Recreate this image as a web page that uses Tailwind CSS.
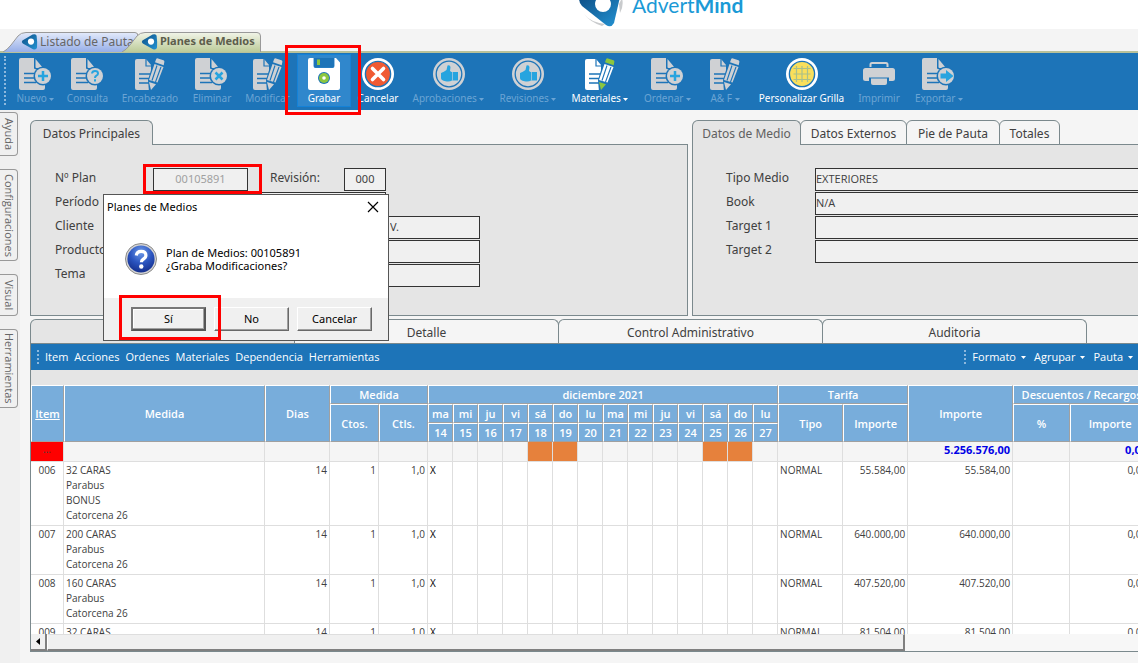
<!DOCTYPE html>
<html lang="es">
<head>
    <meta charset="UTF-8">
    <meta name="viewport" content="width=device-width, initial-scale=1.0">
    <title>AdvertMind - Planes de Medios</title>
    <script src="https://cdn.jsdelivr.net/npm/@tailwindcss/browser@4"></script>
</head>
<body class="h-screen flex flex-col overflow-hidden bg-[#f5f5f5] font-['Noto_Sans',sans-serif] text-[12px] text-[#404040]">
    <!-- Shared icons -->
    <svg class="absolute w-0 h-0">
        <defs>
            <linearGradient id="g-tri" x1="0" y1="0" x2="1" y2="1">
                <stop offset="0" stop-color="#0d4f86"/><stop offset="1" stop-color="#2494d4"/>
            </linearGradient>
        </defs>
        <symbol id="i-brand" viewBox="0 0 18 18">
            <path d="M1.400 7.400 11.600 1.600q3.600-1 4 1.200.9 6.200.4 11.800-.6 2.600-4 1.600L1.800 10.400q-1.800-1.400-.4-3z" fill="url(#g-tri)"/>
            <circle cx="10" cy="8.600" r="3.100" fill="#fff"/>
        </symbol>
        <symbol id="i-doc" viewBox="0 0 34 32">
            <path d="M2 0h13v10q0 1 1 1h10v19q0 2-2 2H2q-2 0-2-2V2q0-2 2-2z" fill="currentColor"/>
            <path d="M15 0h13v10H16z" fill="#1d74b8"/>
            <path d="M16.500 1 24 10H17.500q-1 0-1-1z" fill="currentColor"/>
            <path d="M5 15.500h12M5 20h11M5 24.500h12" stroke="#1d74b8" stroke-width="1.600"/>
            <circle cx="24" cy="18" r="9.500" fill="#1d74b8"/>
            <circle cx="24" cy="18" r="8" fill="currentColor"/>
        </symbol>
        <symbol id="i-pencil" viewBox="0 0 32 32">
            <path d="M3 1h9l5 6v21q0 4-2 4H3q-2 0-2-2V3q0-2 2-2z" fill="currentColor"/>
            <path d="M12 1v7h6" fill="none" stroke="#1d74b8" stroke-width="1.200"/>
            <path d="M5 16h11M5 20.500h11M5 25h11" stroke="#1d74b8" stroke-width="1.600"/>
            <path d="M21-1 32 2.500 23 25 15 34 14 22z" fill="#1d74b8"/>
            <path d="M20.500 6 29.500 9 23.500 24.500 15 22z" fill="currentColor"/>
            <path d="M23 7.500 18 22.500M27 9l-5.500 15" stroke="#1d74b8" stroke-width="1.100"/>
        </symbol>
        <symbol id="i-like" viewBox="0 0 32 32">
            <circle cx="16" cy="16" r="16" fill="currentColor"/>
            <circle cx="16" cy="16" r="12.800" fill="currentColor" stroke="#1d74b8" stroke-width="1.300"/>
            <path d="M18.500 14h6.500v8.500h-6q-2.500 1.500-6.500.7-4.500-.7-4.500-3.200v-5q3-.8 5.500-3l1-4.500q2.500-1 3 1.500l-.5 4z" fill="#27a4df"/>
            <path d="M19.500 14v9" stroke="#8fc3e0" stroke-width="1"/>
        </symbol>
    </svg>

    <!-- Brand header -->
    <header class="relative h-[29px] shrink-0 bg-white pl-[578px] flex items-start gap-[9px]">
        <svg class="w-[45px] h-[29px]" viewBox="0 0 45 29">
            <path d="M6 14Q12 22 27 24L24 26Q12 22 6 14zM44-2Q46 6 42 13L41 4z" fill="#c9cbcd"/>
            <path d="M2-3Q0 2 4 6L28 25Q33 28.500 36 23L42-3z" fill="url(#g-tri)"/>
            <circle cx="25" cy="4" r="8" fill="#fff"/>
        </svg>
        <div class="-mt-[9px] font-['Lato',sans-serif] text-[21px] leading-[28px] text-[#1b9ad6]">Advert<b class="font-bold">Mind</b></div>
    </header>

    <!-- Open documents -->
    <nav class="flex h-[24px] shrink-0 bg-[#f4f4f4] border-b-2 border-[#b8c19a] pt-[3px] pl-[3px]">
        <button class="relative h-[19px] w-[119px] pl-[18px] flex items-center gap-px text-[12px] text-[#666] whitespace-nowrap">
            <svg class="absolute left-0 top-0 w-[136px] h-[20px]" viewBox="0 0 136 20">
                <defs><linearGradient id="g-tab1" x2="0" y2="1"><stop offset="0" stop-color="#e3eafa"/><stop offset="1" stop-color="#96aee8"/></linearGradient></defs>
                <path d="M0 20Q4 18 8 13L15 4Q18 .5 23 .5H132Q135 .5 135 4V20" fill="url(#g-tab1)" stroke="#999"/>
            </svg>
            <svg class="relative w-[18px] h-[18px] shrink-0"><use href="#i-brand"/></svg>
            <span class="relative">Listado de Pautas</span>
        </button>
        <button class="relative h-[19px] w-[140px] pl-[19px] flex items-center gap-px text-[11px] font-bold text-[#5d5d4c] whitespace-nowrap">
            <svg class="absolute left-0 top-0 w-[140px] h-[20px]" viewBox="0 0 140 20">
                <defs><linearGradient id="g-tab2" x2="0" y2="1"><stop offset="0" stop-color="#f1f4e8"/><stop offset="1" stop-color="#bccb98"/></linearGradient></defs>
                <path d="M0 20Q4 18 8 13L15 4Q18 .5 23 .5H135Q138.500 .5 138.500 4V20" fill="url(#g-tab2)" stroke="#999"/>
            </svg>
            <svg class="relative w-[18px] h-[18px] shrink-0"><use href="#i-brand"/></svg>
            <span class="relative">Planes de Medios</span>
        </button>
    </nav>

    <!-- Main toolbar -->
    <div id="toolbar" class="flex h-[57px] shrink-0 bg-[#1d74b8] pl-[4px] pt-px text-[10px] text-white">
        <div class="w-[6px] h-[49px] mt-[2px]"><div class="w-0 h-full border-l-2 border-dotted border-[#8db8dd]"></div></div>
        <button class="w-[51px] h-[53px] flex flex-col items-center pt-1 text-[#6ba4d4]">
            <svg class="w-[34px] h-[32px] shrink-0 text-[#cfd1d4]" viewBox="0 0 34 32"><use href="#i-doc"/><path d="M24 13v10M19 18h10" stroke="#27a4df" stroke-width="2.500"/></svg>
            <span class="leading-[17px] whitespace-nowrap">Nuevo <svg class="inline w-[5px] h-[3px]" viewBox="0 0 5 3"><path d="M0 0h5L2.500 3z" fill="currentColor"/></svg></span>
        </button>
        <button class="w-[53px] h-[53px] flex flex-col items-center pt-1 text-[#6ba4d4]">
            <svg class="w-[34px] h-[32px] shrink-0 text-[#cfd1d4]" viewBox="0 0 34 32"><use href="#i-doc"/><path d="M21 15.500q.3-2.500 3-2.500 3 0 3 2.400 0 1.400-1.600 2.200-1.400.8-1.400 2.400M24 21.300v2.200" fill="none" stroke="#27a4df" stroke-width="2"/></svg>
            <span class="leading-[17px]">Consulta</span>
        </button>
        <button class="w-[72px] h-[53px] flex flex-col items-center pt-1 text-[#6ba4d4]">
            <svg class="w-[32px] h-[32px] shrink-0 text-[#cfd1d4]" viewBox="0 0 32 32"><use href="#i-pencil"/><path d="M22 1.500q.6-1.500 2-1.100l5.500 1.900q1.300.6.8 2L29.700 7.300 21 4.300zM15 24l7 2.200L17 32z" fill="currentColor"/></svg>
            <span class="leading-[17px]">Encabezado</span>
        </button>
        <button class="w-[52px] h-[53px] flex flex-col items-center pt-1 text-[#6ba4d4]">
            <svg class="w-[34px] h-[32px] shrink-0 text-[#cfd1d4]" viewBox="0 0 34 32"><use href="#i-doc"/><path d="m20.500 14.500 7 7m0-7-7 7" stroke="#27a4df" stroke-width="2.500"/></svg>
            <span class="leading-[17px]">Eliminar</span>
        </button>
        <button class="w-[59px] h-[53px] flex flex-col items-center pt-1 text-[#6ba4d4]">
            <svg class="w-[32px] h-[32px] shrink-0 text-[#cfd1d4]" viewBox="0 0 32 32"><use href="#i-pencil"/><path d="M22 1.500q.6-1.500 2-1.100l5.500 1.900q1.300.6.8 2L29.700 7.300 21 4.300zM15 24l7 2.200L17 32z" fill="currentColor"/></svg>
            <span class="leading-[17px]">Modificar</span>
        </button>
        <button class="relative w-[54px] h-[53px] flex flex-col items-center pt-[3px] border border-[#1482d8] bg-[#3087cc]">
            <svg class="w-[32px] h-[32px] shrink-0" viewBox="0 0 32 32">
                <path d="M2 0h3.500v8q0 2 2 2h17q2 0 2-2V0H28l4 4.500V30q0 2-2 2H2q-2 0-2-2V2q0-2 2-2z" fill="#fff"/>
                <path d="M6 0h20v8q0 1.500-1.500 1.500h-17Q6 9.500 6 8z" fill="#1d74b8"/>
                <path d="M9 1.500h3V7H9z" fill="#8cc63f"/>
                <circle cx="16" cy="20" r="6" fill="#1d74b8"/><circle cx="16" cy="20" r="5" fill="#8cc63f"/><circle cx="16" cy="20" r="1.800" fill="#fff"/>
            </svg>
            <span class="leading-[17px]">Grabar</span>
            <span class="absolute z-10 -left-[13px] -top-[10px] w-[76px] h-[70px] border-3 border-[#f00]"></span>
        </button>
        <button class="w-[54px] h-[53px] flex flex-col items-center pt-1">
            <svg class="w-[32px] h-[32px] shrink-0" viewBox="0 0 32 32">
                <circle cx="16" cy="16" r="16" fill="#fff"/><circle cx="16" cy="16" r="12.600" fill="#f05a33" stroke="#1d74b8" stroke-width="1.400"/>
                <path d="m10.500 10.500 11 11m0-11-11 11" stroke="#fff" stroke-width="3.600" stroke-linecap="round"/>
            </svg>
            <span class="leading-[17px]">Cancelar</span>
        </button>
        <button class="w-[87px] h-[53px] flex flex-col items-center pt-1 text-[#6ba4d4]">
            <svg class="w-[32px] h-[32px] shrink-0 text-[#cfd1d4]"><use href="#i-like"/></svg>
            <span class="leading-[17px] whitespace-nowrap">Aprobaciones <svg class="inline w-[5px] h-[3px]" viewBox="0 0 5 3"><path d="M0 0h5L2.500 3z" fill="currentColor"/></svg></span>
        </button>
        <button class="w-[72px] h-[53px] flex flex-col items-center pt-1 text-[#6ba4d4]">
            <svg class="w-[32px] h-[32px] shrink-0 text-[#cfd1d4]"><use href="#i-like"/></svg>
            <span class="leading-[17px] whitespace-nowrap">Revisiones <svg class="inline w-[5px] h-[3px]" viewBox="0 0 5 3"><path d="M0 0h5L2.500 3z" fill="currentColor"/></svg></span>
        </button>
        <button class="w-[72px] h-[53px] flex flex-col items-center pt-1">
            <svg class="w-[32px] h-[32px] shrink-0" viewBox="0 0 32 32"><use href="#i-pencil"/><path d="M22 1.500q.6-1.500 2-1.100l5.500 1.900q1.300.6.8 2L29.700 7.300 21 4.300zM15 24l7 2.200L17 32z" fill="#8cc63f"/></svg>
            <span class="leading-[17px] whitespace-nowrap">Materiales <svg class="inline w-[5px] h-[3px]" viewBox="0 0 5 3"><path d="M0 0h5L2.500 3z" fill="currentColor"/></svg></span>
        </button>
        <button class="w-[63px] h-[53px] flex flex-col items-center pt-1 text-[#6ba4d4]">
            <svg class="w-[34px] h-[32px] shrink-0 text-[#cfd1d4]" viewBox="0 0 34 32"><use href="#i-doc"/><path d="M24 13v10M19 18h10" stroke="#27a4df" stroke-width="2.500"/></svg>
            <span class="leading-[17px] whitespace-nowrap">Ordenar <svg class="inline w-[5px] h-[3px]" viewBox="0 0 5 3"><path d="M0 0h5L2.500 3z" fill="currentColor"/></svg></span>
        </button>
        <button class="w-[52px] h-[53px] flex flex-col items-center pt-1 text-[#6ba4d4]">
            <svg class="w-[32px] h-[32px] shrink-0 text-[#cfd1d4]" viewBox="0 0 32 32"><use href="#i-pencil"/><path d="M22 1.500q.6-1.500 2-1.100l5.500 1.900q1.300.6.8 2L29.700 7.300 21 4.300zM15 24l7 2.200L17 32z" fill="currentColor"/></svg>
            <span class="leading-[17px] whitespace-nowrap">A&amp; F <svg class="inline w-[5px] h-[3px]" viewBox="0 0 5 3"><path d="M0 0h5L2.500 3z" fill="currentColor"/></svg></span>
        </button>
        <button class="w-[101px] h-[53px] flex flex-col items-center pt-1">
            <svg class="w-[32px] h-[32px] shrink-0" viewBox="0 0 32 32">
                <circle cx="16" cy="16" r="16" fill="#fff"/><circle cx="16" cy="16" r="12.600" fill="#f9df5b" stroke="#1d74b8" stroke-width="1.400"/>
                <path d="M7.500 10.500h17M7.500 16h17M7.500 21.500h17M10.500 8v16M16 8v16M21.500 8v16" stroke="#a9c08a" stroke-width="1.200"/>
            </svg>
            <span class="leading-[17px] whitespace-nowrap">Personalizar Grilla</span>
        </button>
        <button class="w-[54px] h-[53px] flex flex-col items-center pt-1 text-[#6ba4d4]">
            <svg class="w-[32px] h-[32px] shrink-0 text-[#cfd1d4]" viewBox="0 0 32 32">
                <path d="M7.500 9V6.500Q7.500 5 9 5h14q1.500 0 1.500 1.500V9" fill="none" stroke="currentColor" stroke-width="2"/>
                <path d="M2.500 10h27q2.500 0 2.500 2.500v8q0 2.500-2.500 2.500H26v-3.500H6V23H2.500Q0 23 0 20.500v-8Q0 10 2.500 10z" fill="currentColor"/>
                <path d="M8 20.500h16V25q0 2-2 2H10q-2 0-2-2z" fill="currentColor"/>
            </svg>
            <span class="leading-[17px]">Imprimir</span>
        </button>
        <button class="w-[66px] h-[53px] flex flex-col items-center pt-1 text-[#6ba4d4]">
            <svg class="w-[34px] h-[32px] shrink-0 text-[#cfd1d4]" viewBox="0 0 34 32"><use href="#i-doc"/><path d="M18.500 15.500H24V12l7.500 6-7.500 6v-3.500h-5.500z" fill="#27a4df"/></svg>
            <span class="leading-[17px] whitespace-nowrap">Exportar <svg class="inline w-[5px] h-[3px]" viewBox="0 0 5 3"><path d="M0 0h5L2.500 3z" fill="currentColor"/></svg></span>
        </button>
    </div>

    <div class="flex flex-1 min-h-0">
        <!-- Side tabs -->
        <nav class="w-[20px] shrink-0 bg-[#f0f0f0] pt-[2px] flex flex-col items-start gap-[13px] font-['Open_Sans',sans-serif] text-[11px] text-[#666]">
            <button class="w-[18px] h-[44px] border border-l-0 border-[#999] rounded-r-[4px] flex items-center justify-center [writing-mode:vertical-rl]">Ayuda</button>
            <button class="w-[18px] h-[92px] border border-l-0 border-[#999] rounded-r-[4px] flex items-center justify-center [writing-mode:vertical-rl]">Configuraciones</button>
            <button class="w-[18px] h-[42px] border border-l-0 border-[#999] rounded-r-[4px] flex items-center justify-center [writing-mode:vertical-rl]">Visual</button>
            <button class="w-[18px] h-[79px] border border-l-0 border-[#999] rounded-r-[4px] flex items-center justify-center [writing-mode:vertical-rl]">Herramientas</button>
        </nav>

        <main class="relative flex-1 min-w-0 flex flex-col pl-[10px] pt-[10px] pb-[11px]">
            <div class="flex gap-[4px] shrink-0">
                <!-- Datos principales -->
                <section class="w-[658px] shrink-0">
                    <div class="flex h-[25px]">
                        <button class="relative z-10 h-[25px] w-[123px] pt-[2px] border border-b-0 border-[#7b898d] rounded-t-[6px] bg-[#e5e5e5]">Datos Principales</button>
                    </div>
                    <div class="-mt-px h-[172px] border border-[#7b898d] bg-[#e5e5e5] pl-[24px] pt-[23px] flex flex-col gap-px [&_label]:pb-[3px] [&_input]:pb-[3px]">
                        <div class="flex items-center h-[23px]">
                            <label for="plan" class="w-[98px]">Nº Plan</label>
                            <div class="relative w-[95px] h-[23px]">
                                <input id="plan" value="00105891" class="w-full h-full border border-[#333] bg-[#f0f0f0] text-center text-[11px] text-[#a0a0a0]">
                                <span class="absolute -left-[10px] -top-[4px] w-[119px] h-[30px] border-3 border-[#f00]"></span>
                            </div>
                            <label for="revision" class="w-[96px] pl-[22px]">Revisión:</label>
                            <input id="revision" value="000" class="w-[42px] h-[23px] border border-[#333] bg-[#f0f0f0] text-center text-[11px]">
                        </div>
                        <div class="flex items-center h-[23px]">
                            <label for="periodo" class="w-[98px]">Período</label>
                            <input id="periodo" class="w-[233px] h-[23px] border border-[#333] bg-[#f0f0f0]">
                        </div>
                        <div class="flex items-center h-[23px]">
                            <label for="cliente" class="w-[98px]">Cliente</label>
                            <input id="cliente" value="V." class="w-[327px] h-[23px] border border-[#333] bg-[#f0f0f0] pl-[236px] text-[11px]">
                        </div>
                        <div class="flex items-center h-[23px]">
                            <label for="producto" class="w-[98px]">Producto</label>
                            <input id="producto" class="w-[327px] h-[23px] border border-[#333] bg-[#f0f0f0]">
                        </div>
                        <div class="flex items-center h-[23px]">
                            <label for="tema" class="w-[98px]">Tema</label>
                            <input id="tema" class="w-[327px] h-[23px] border border-[#333] bg-[#f0f0f0]">
                        </div>
                    </div>
                </section>

                <!-- Datos de medio -->
                <section class="flex-1 min-w-0">
                    <div class="flex h-[25px]">
                        <button class="relative z-10 h-[25px] w-[109px] pt-[2px] border border-b-0 border-[#7b898d] rounded-t-[6px] bg-[#e5e5e5] text-[#606060]">Datos de Medio</button>
                        <button class="-ml-px h-[25px] w-[107px] pt-[2px] border border-[#7b898d] rounded-t-[6px] bg-[#f5f5f5]">Datos Externos</button>
                        <button class="-ml-px h-[25px] w-[94px] pt-[2px] border border-[#7b898d] rounded-t-[6px] bg-[#f5f5f5]">Pie de Pauta</button>
                        <button class="-ml-px h-[25px] w-[61px] pt-[2px] border border-[#7b898d] rounded-t-[6px] bg-[#f5f5f5]">Totales</button>
                    </div>
                    <div class="-mt-px h-[172px] border border-r-0 border-[#7b898d] bg-[#e5e5e5] pl-[33px] pt-[23px] flex flex-col gap-px [&_label]:pb-[3px] [&_input]:pb-[3px]">
                        <div class="flex items-center h-[23px]">
                            <label for="tipo" class="w-[89px]">Tipo Medio</label>
                            <input id="tipo" value="EXTERIORES" class="flex-1 min-w-0 h-[23px] border border-r-0 border-[#333] bg-[#f0f0f0] font-['Open_Sans',sans-serif] text-[11px]">
                        </div>
                        <div class="flex items-center h-[23px]">
                            <label for="book" class="w-[89px]">Book</label>
                            <input id="book" value="N/A" class="flex-1 min-w-0 h-[23px] border border-r-0 border-[#333] bg-[#f0f0f0] font-['Open_Sans',sans-serif] text-[11px]">
                        </div>
                        <div class="flex items-center h-[23px]">
                            <label for="target1" class="w-[89px]">Target 1</label>
                            <input id="target1" class="flex-1 min-w-0 h-[23px] border border-r-0 border-[#333] bg-[#f0f0f0]">
                        </div>
                        <div class="flex items-center h-[23px]">
                            <label for="target2" class="w-[89px]">Target 2</label>
                            <input id="target2" class="flex-1 min-w-0 h-[23px] border border-r-0 border-[#333] bg-[#f0f0f0]">
                        </div>
                    </div>
                </section>
            </div>

            <!-- Detail tabs -->
            <div class="flex shrink-0 h-[24px] mt-[3px]">
                <button class="w-[265px] border border-b-0 border-[#7b898d] rounded-t-[6px] bg-[#e5e5e5]" aria-label="Items"></button>
                <button class="-ml-px w-[265px] pt-[2px] border border-b-0 border-[#7b898d] rounded-t-[6px]">Detalle</button>
                <button class="-ml-px w-[265px] pt-[2px] border border-b-0 border-[#7b898d] rounded-t-[6px]">Control Administrativo</button>
                <button class="-ml-px w-[265px] pt-[2px] border border-b-0 border-[#7b898d] rounded-t-[6px]">Auditoria</button>
            </div>

            <section class="flex-1 min-h-0 flex flex-col border border-r-0 border-[#7b898d] bg-[#e5e5e5]">
                <div class="flex items-center justify-between shrink-0 h-[26px] bg-[#1d74b8] text-white font-['Open_Sans',sans-serif] text-[11px] pl-[6px] whitespace-nowrap">
                    <div class="flex items-center gap-[6px]">
                        <div class="w-0 h-[14px] border-l-2 border-dotted border-[#8db8dd]"></div>
                        <button>Item</button>
                        <button>Acciones</button>
                        <button>Ordenes</button>
                        <button>Materiales</button>
                        <button>Dependencia</button>
                        <button>Herramientas</button>
                    </div>
                    <div class="flex items-center gap-[8px]">
                        <div class="w-0 h-[14px] border-l-2 border-dotted border-[#8db8dd] -mr-[2px]"></div>
                        <button class="flex items-center gap-[5px]">Formato <svg class="w-[5px] h-[3px]" viewBox="0 0 5 3"><path d="M0 0h5L2.500 3z" fill="currentColor"/></svg></button>
                        <button class="flex items-center gap-[5px]">Agrupar <svg class="w-[5px] h-[3px]" viewBox="0 0 5 3"><path d="M0 0h5L2.500 3z" fill="currentColor"/></svg></button>
                        <button class="flex items-center gap-[5px] pr-[5px]">Pauta <svg class="w-[5px] h-[3px]" viewBox="0 0 5 3"><path d="M0 0h5L2.500 3z" fill="currentColor"/></svg></button>
                    </div>
                </div>

                <!-- Grid -->
                <div class="mt-[15px] flex-1 min-h-0 overflow-hidden bg-white">
                    <table class="table-fixed w-[1119px] border-separate border-spacing-0 font-['Open_Sans',sans-serif] text-[10px] leading-[15px]">
                        <colgroup id="cols"></colgroup>
                        <thead id="head" class="text-white text-[11px] [&_th]:bg-[#78addb] [&_th]:border [&_th]:border-t-white [&_th]:border-l-white [&_th]:border-r-[#a0a0a0] [&_th]:border-b-[#a0a0a0] [&_th]:p-0 [&_th]:font-semibold [&_th]:leading-[15px] [&_th]:whitespace-nowrap"></thead>
                        <tbody id="rows" class="[&_td]:border-r [&_td]:border-b [&_td]:border-[#dedede] [&_td]:px-[2px] [&_td]:align-top"></tbody>
                    </table>
                </div>

                <!-- Horizontal scrollbar -->
                <div class="flex shrink-0 h-[17px] bg-[#f7f7f7]">
                    <button class="w-[16px] bg-[#f0f0f0] border-r-2 border-b-2 border-[#808080] flex items-center justify-center" aria-label="Desplazar a la izquierda">
                        <svg class="w-[4px] h-[7px]" viewBox="0 0 4 7"><path d="M4 0v7L0 3.500z" fill="#000"/></svg>
                    </button>
                    <div class="w-[858px] bg-[#f0f0f0] border-t border-l border-t-[#dedede] border-l-white border-r-2 border-b-2 border-r-[#808080] border-b-[#808080]"></div>
                </div>
            </section>

            <!-- Confirmation dialog -->
            <div role="dialog" aria-label="Planes de Medios" class="absolute left-[83px] top-[84px] z-20 w-[286px] border border-[#555] bg-white text-[11px] text-black">
                <div class="flex items-center justify-between h-[24px] pl-[3px] pr-[9px]">
                    <span>Planes de Medios</span>
                    <button aria-label="Cerrar"><svg class="w-[12px] h-[12px]" viewBox="0 0 12 12"><path d="m1 1 10 10M11 1 1 11" stroke="#000" stroke-width="1.200"/></svg></button>
                </div>
                <div class="flex items-center gap-[9px] h-[79px] pl-[21px]">
                    <svg class="w-[32px] h-[32px]" viewBox="0 0 32 32">
                        <defs><radialGradient id="g-q" cx=".5" cy=".25" r=".8"><stop offset="0" stop-color="#6f9be8"/><stop offset=".5" stop-color="#2b55c0"/><stop offset="1" stop-color="#122a86"/></radialGradient></defs>
                        <circle cx="16" cy="16" r="15.500" fill="#d5d5d5" stroke="#8a8a8a"/>
                        <circle cx="16" cy="16" r="13.600" fill="url(#g-q)"/>
                        <path d="M11.300 12.500q.4-4.200 4.900-4.200 4.700 0 4.700 4 0 2.300-2.400 3.700-2.100 1.200-2.100 3.300" fill="none" stroke="#fff" stroke-width="3.200"/>
                        <circle cx="16.300" cy="23.500" r="2.200" fill="#fff"/>
                    </svg>
                    <p class="leading-[13px]">Plan de Medios: 00105891<br>¿Graba Modificaciones?</p>
                </div>
                <div class="flex gap-[8px] h-[42px] bg-[#f0f0f0] pl-[27px] pt-[9px]">
                    <div class="relative w-[75px] h-[24px]">
                        <button class="w-full h-full bg-[#f0f0f0] border-2 border-t-[#777] border-l-[#777] border-r-[#555] border-b-[#555] shadow-[inset_-1px_-1px_#a0a0a0,inset_1px_1px_#fff]">Sí</button>
                        <span class="absolute -left-[12px] -top-[12px] w-[102px] h-[45px] border-3 border-[#f00]"></span>
                    </div>
                    <button class="w-[75px] h-[24px] bg-[#f0f0f0] border border-t-white border-l-white border-r-[#696969] border-b-[#696969] shadow-[inset_-1px_-1px_#a0a0a0]">No</button>
                    <button class="w-[75px] h-[24px] bg-[#f0f0f0] border border-t-white border-l-white border-r-[#696969] border-b-[#696969] shadow-[inset_-1px_-1px_#a0a0a0]">Cancelar</button>
                </div>
            </div>
        </main>
    </div>

    <script>
        const widths = [33, 201, 65, 49, 49, ...Array(14).fill(25), 65, 65, 105, 57, 80];
        const names = ['ma', 'mi', 'ju', 'vi', 'sá', 'do', 'lu'];
        const days = Array.from({ length: 14 }, (_, i) => ({ n: 14 + i, name: names[i % 7], weekend: i % 7 === 4 || i % 7 === 5 }));
        const items = [
            { id: '006', text: ['32 CARAS', 'Parabus', 'BONUS', 'Catorcena 26'], amount: '55.584,00' },
            { id: '007', text: ['200 CARAS', 'Parabus', 'Catorcena 26'], amount: '640.000,00' },
            { id: '008', text: ['160 CARAS', 'Parabus', 'Catorcena 26'], amount: '407.520,00' },
            { id: '009', text: ['32 CARAS', 'Parabus', 'Catorcena 26'], amount: '81.504,00' }
        ];

        document.getElementById('cols').innerHTML = widths.map(w => `<col style="width:${w}px">`).join('');

        document.getElementById('head').innerHTML = `
            <tr class="h-[19px]">
                <th rowspan="3"><a href="#" class="underline">Item</a></th>
                <th rowspan="3">Medida</th>
                <th rowspan="3">Dias</th>
                <th colspan="2">Medida</th>
                <th colspan="14">diciembre 2021</th>
                <th colspan="2">Tarifa</th>
                <th rowspan="3">Importe</th>
                <th colspan="2">Descuentos / Recargos</th>
            </tr>
            <tr class="h-[19px]">
                <th rowspan="2">Ctos.</th>
                <th rowspan="2">Ctls.</th>
                ${days.map(d => `<th>${d.name}</th>`).join('')}
                <th rowspan="2">Tipo</th>
                <th rowspan="2">Importe</th>
                <th rowspan="2">%</th>
                <th rowspan="2">Importe</th>
            </tr>
            <tr class="h-[19px]">${days.map(d => `<th>${d.n}</th>`).join('')}</tr>`;

        const total = `
            <tr class="h-[20px] bg-[#f5f5f5]">
                <td class="bg-[#f00] text-center">...</td>
                <td></td><td></td><td></td><td></td>
                ${days.map(d => d.weekend ? '<td class="bg-[#e6813c]"></td>' : '<td></td>').join('')}
                <td></td><td></td>
                <td class="text-right font-bold text-[11px] text-[#0000e6]">5.256.576,00</td>
                <td></td>
                <td class="text-right font-bold text-[11px] text-[#0000e6]">0,00</td>
            </tr>`;

        document.getElementById('rows').innerHTML = total + items.map(r => `
            <tr>
                <td class="text-center pt-px">${r.id}</td>
                <td class="pt-px pb-[2px]">${r.text.join('<br>')}</td>
                <td class="text-right pt-px">14</td>
                <td class="text-right pt-px">1</td>
                <td class="text-right pt-px">1,0</td>
                ${days.map((d, i) => `<td class="pt-px text-black">${i === 0 ? 'X' : ''}</td>`).join('')}
                <td class="pt-px">NORMAL</td>
                <td class="text-right pt-px">${r.amount}</td>
                <td class="text-right pt-px">${r.amount}</td>
                <td></td>
                <td class="text-right pt-px">0,00</td>
            </tr>`).join('');
    </script>
</body>
</html>
